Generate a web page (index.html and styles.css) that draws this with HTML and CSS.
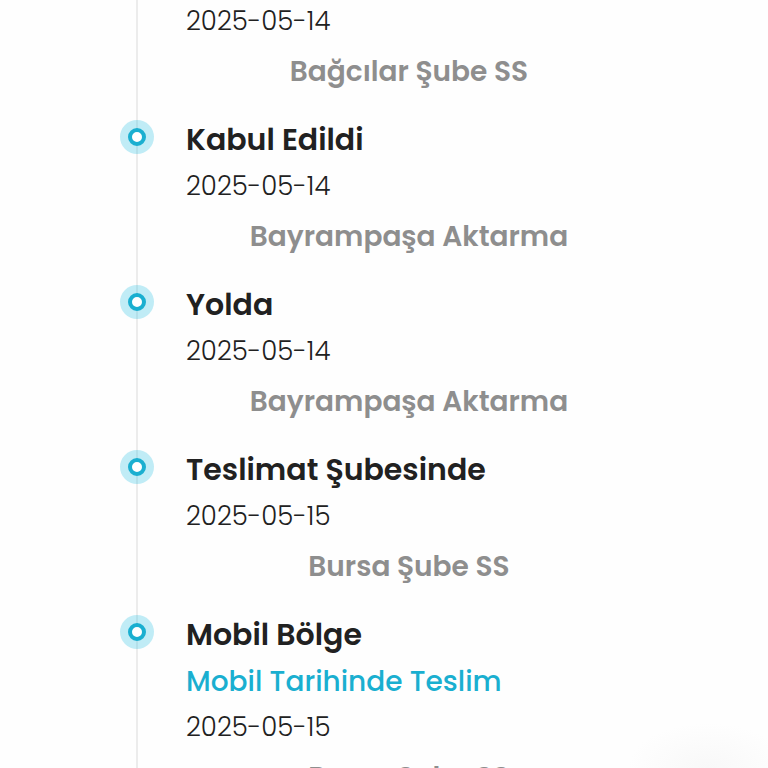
FILE: index.html
```html
<!DOCTYPE html>
<html lang="tr">
<head>
    <meta charset="UTF-8">
    <title>Kargo Takip</title>
    <link rel="stylesheet" href="styles.css">
</head>
<body>
<ul class="timeline">
    <li class="step first">
        <p class="date">2025-05-14</p>
        <p class="place">Bağcılar Şube SS</p>
    </li>
    <li class="step">
        <span class="dot"></span>
        <h3 class="title">Kabul Edildi</h3>
        <p class="date">2025-05-14</p>
        <p class="place">Bayrampaşa Aktarma</p>
    </li>
    <li class="step">
        <span class="dot"></span>
        <h3 class="title">Yolda</h3>
        <p class="date">2025-05-14</p>
        <p class="place">Bayrampaşa Aktarma</p>
    </li>
    <li class="step">
        <span class="dot"></span>
        <h3 class="title">Teslimat Şubesinde</h3>
        <p class="date">2025-05-15</p>
        <p class="place">Bursa Şube SS</p>
    </li>
    <li class="step">
        <span class="dot"></span>
        <h3 class="title">Mobil Bölge</h3>
        <p class="note">Mobil Tarihinde Teslim</p>
        <p class="date">2025-05-15</p>
        <p class="place">Bursa Şube SS</p>
    </li>
</ul>
<div class="glow"></div>
</body>
</html>
```

FILE: styles.css
```css
*{
    padding: 0;
    margin: 0;
    box-sizing: border-box;
}
body{
    height: 100vh;
    overflow: hidden;
    background-color: #fefefe;
    font-family: Poppins, Inter, sans-serif;
    color: #212121;
}
ul{
    list-style-type: none;
}
.timeline{
    padding: 0 136px;
}
.step{
    position: relative;
    padding: 0 0 15px 48px;
    border-left: 2px solid #ececec;
}
.first{
    margin-top: -1px;
}
/* ring with a pale halo, centred on the line */
.dot{
    position: absolute;
    top: 12px;
    left: -10px;
    width: 18px;
    height: 18px;
    border: 4px solid #1aafd0;
    border-radius: 50%;
    background-color: #fff;
    box-shadow: 0 0 0 8px rgba(26, 190, 224, 0.27);
}
.title{
    font-size: 30px;
    font-weight: 600;
    line-height: 48px;
}
.note{
    font-size: 28px;
    font-weight: 500;
    line-height: 46px;
    color: #1aafd0;
}
.date{
    font-size: 26px;
    font-weight: 300;
    line-height: 44px;
}
.place{
    font-size: 28px;
    font-weight: 600;
    line-height: 58px;
    text-align: center;
    color: #8e8e8e;
}
/* soft shadow at the bottom corner */
.glow{
    position: fixed;
    right: 0;
    bottom: 0;
    width: 150px;
    height: 50px;
    background: radial-gradient(ellipse 80px 45px at 60% 100%, #f8f8f8, #fefefe);
}
```
